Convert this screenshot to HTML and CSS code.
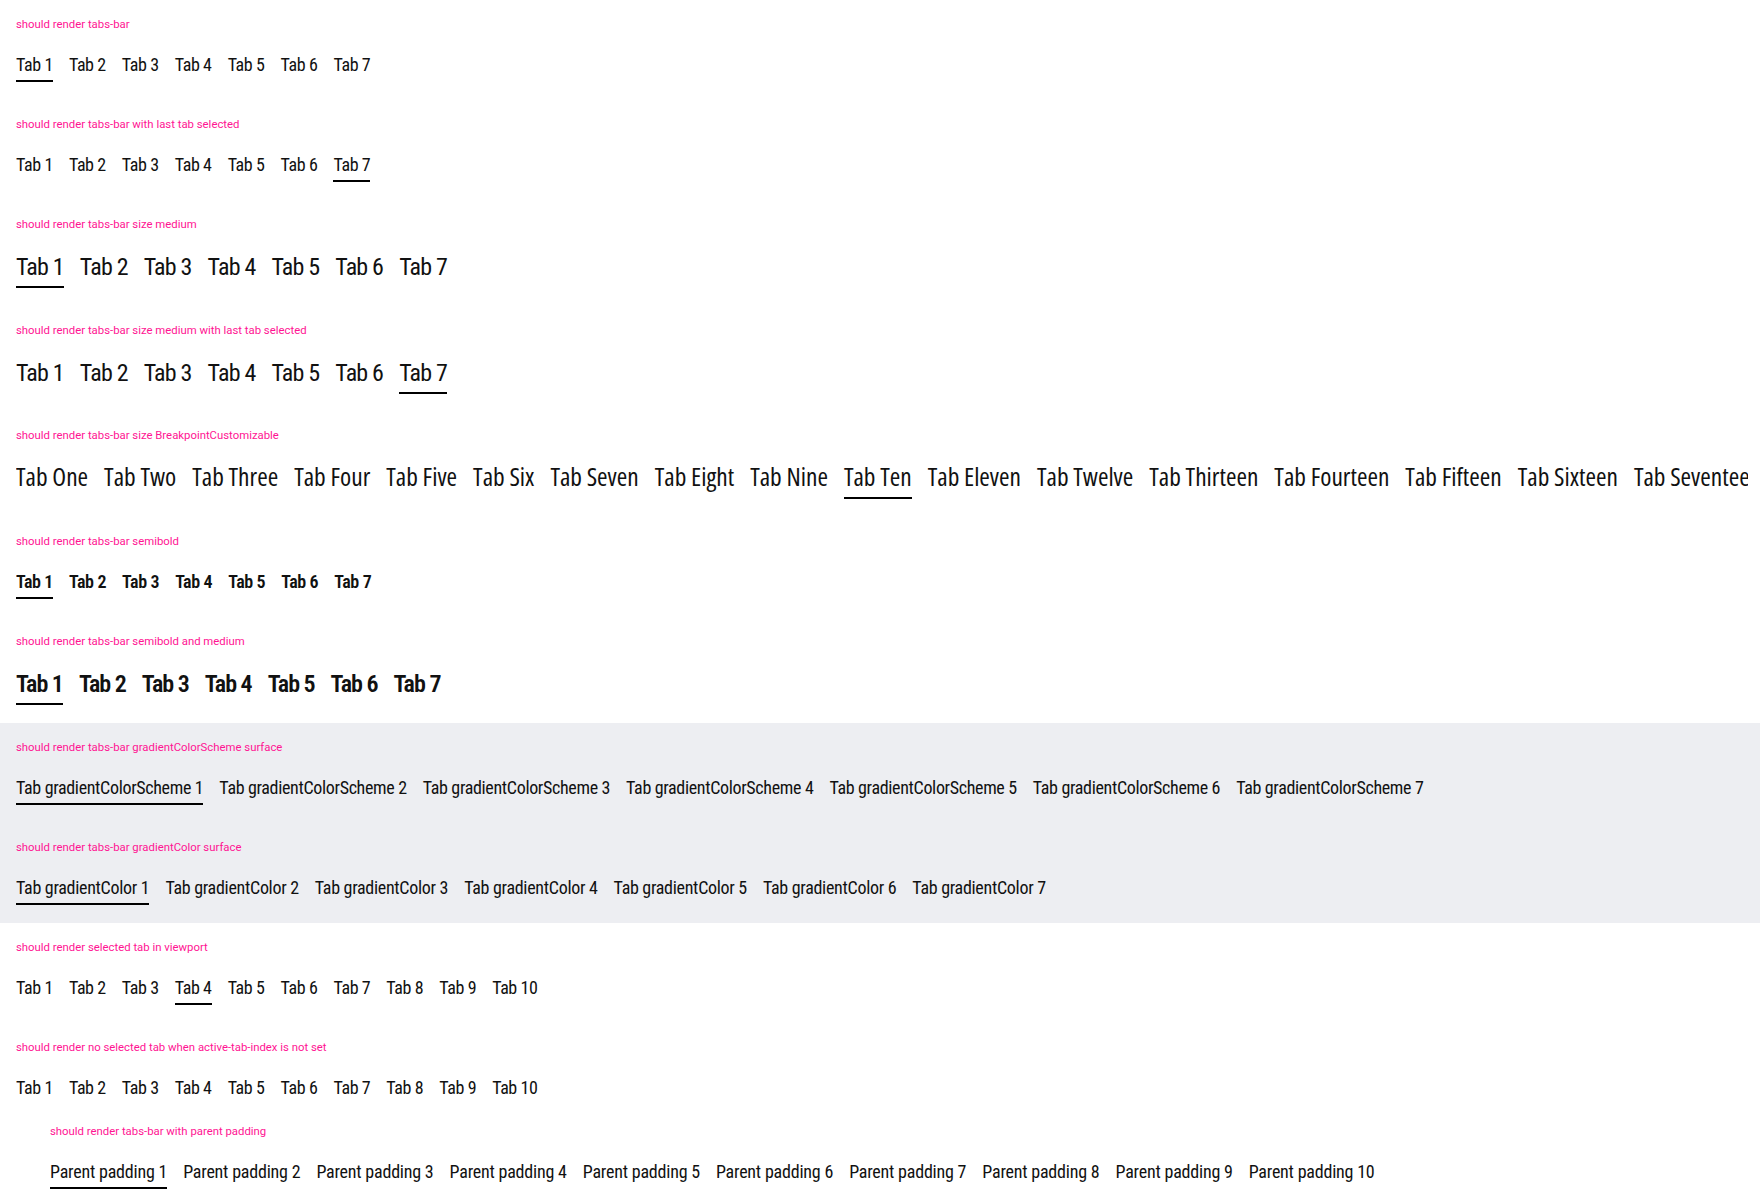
FILE: index.html
```html
<!DOCTYPE html>
<html lang="en">
<head>
<meta charset="utf-8">
<title>tabs-bar</title>
<link rel="stylesheet" href="styles.css">
</head>
<body>
<section class="section">
  <p class="label">should render tabs-bar</p>
  <div class="tabs tabs-small tabs-short">
    <span class="tab active">Tab 1</span><span class="tab">Tab 2</span><span class="tab">Tab 3</span><span class="tab">Tab 4</span><span class="tab">Tab 5</span><span class="tab">Tab 6</span><span class="tab">Tab 7</span>
  </div>
</section>
<section class="section">
  <p class="label">should render tabs-bar with last tab selected</p>
  <div class="tabs tabs-small tabs-short">
    <span class="tab">Tab 1</span><span class="tab">Tab 2</span><span class="tab">Tab 3</span><span class="tab">Tab 4</span><span class="tab">Tab 5</span><span class="tab">Tab 6</span><span class="tab active">Tab 7</span>
  </div>
</section>
<section class="section section-medium">
  <p class="label">should render tabs-bar size medium</p>
  <div class="tabs tabs-medium">
    <span class="tab active">Tab 1</span><span class="tab">Tab 2</span><span class="tab">Tab 3</span><span class="tab">Tab 4</span><span class="tab">Tab 5</span><span class="tab">Tab 6</span><span class="tab">Tab 7</span>
  </div>
</section>
<section class="section section-medium">
  <p class="label">should render tabs-bar size medium with last tab selected</p>
  <div class="tabs tabs-medium">
    <span class="tab">Tab 1</span><span class="tab">Tab 2</span><span class="tab">Tab 3</span><span class="tab">Tab 4</span><span class="tab">Tab 5</span><span class="tab">Tab 6</span><span class="tab active">Tab 7</span>
  </div>
</section>
<section class="section section-medium">
  <p class="label">should render tabs-bar size BreakpointCustomizable</p>
  <div class="tabs tabs-breakpoint">
    <span class="tab">Tab One</span><span class="tab">Tab Two</span><span class="tab">Tab Three</span><span class="tab">Tab Four</span><span class="tab">Tab Five</span><span class="tab">Tab Six</span><span class="tab">Tab Seven</span><span class="tab">Tab Eight</span><span class="tab">Tab Nine</span><span class="tab active">Tab Ten</span><span class="tab">Tab Eleven</span><span class="tab">Tab Twelve</span><span class="tab">Tab Thirteen</span><span class="tab">Tab Fourteen</span><span class="tab">Tab Fifteen</span><span class="tab">Tab Sixteen</span><span class="tab">Tab Seventeen</span>
  </div>
</section>
<section class="section">
  <p class="label">should render tabs-bar semibold</p>
  <div class="tabs tabs-small tabs-semibold">
    <span class="tab active">Tab 1</span><span class="tab">Tab 2</span><span class="tab">Tab 3</span><span class="tab">Tab 4</span><span class="tab">Tab 5</span><span class="tab">Tab 6</span><span class="tab">Tab 7</span>
  </div>
</section>
<section class="section section-medium">
  <p class="label">should render tabs-bar semibold and medium</p>
  <div class="tabs tabs-medium tabs-semibold">
    <span class="tab active">Tab 1</span><span class="tab">Tab 2</span><span class="tab">Tab 3</span><span class="tab">Tab 4</span><span class="tab">Tab 5</span><span class="tab">Tab 6</span><span class="tab">Tab 7</span>
  </div>
</section>
<section class="section section-surface">
  <p class="label">should render tabs-bar gradientColorScheme surface</p>
  <div class="tabs tabs-small">
    <span class="tab active">Tab gradientColorScheme 1</span><span class="tab">Tab gradientColorScheme 2</span><span class="tab">Tab gradientColorScheme 3</span><span class="tab">Tab gradientColorScheme 4</span><span class="tab">Tab gradientColorScheme 5</span><span class="tab">Tab gradientColorScheme 6</span><span class="tab">Tab gradientColorScheme 7</span>
  </div>
</section>
<section class="section section-surface">
  <p class="label">should render tabs-bar gradientColor surface</p>
  <div class="tabs tabs-small tabs-mid">
    <span class="tab active">Tab gradientColor 1</span><span class="tab">Tab gradientColor 2</span><span class="tab">Tab gradientColor 3</span><span class="tab">Tab gradientColor 4</span><span class="tab">Tab gradientColor 5</span><span class="tab">Tab gradientColor 6</span><span class="tab">Tab gradientColor 7</span>
  </div>
</section>
<section class="section">
  <p class="label">should render selected tab in viewport</p>
  <div class="tabs tabs-small tabs-short">
    <span class="tab">Tab 1</span><span class="tab">Tab 2</span><span class="tab">Tab 3</span><span class="tab active">Tab 4</span><span class="tab">Tab 5</span><span class="tab">Tab 6</span><span class="tab">Tab 7</span><span class="tab">Tab 8</span><span class="tab">Tab 9</span><span class="tab">Tab 10</span>
  </div>
</section>
<section class="section">
  <p class="label">should render no selected tab when active-tab-index is not set</p>
  <div class="tabs tabs-small tabs-short">
    <span class="tab">Tab 1</span><span class="tab">Tab 2</span><span class="tab">Tab 3</span><span class="tab">Tab 4</span><span class="tab">Tab 5</span><span class="tab">Tab 6</span><span class="tab">Tab 7</span><span class="tab">Tab 8</span><span class="tab">Tab 9</span><span class="tab">Tab 10</span>
  </div>
</section>
<section class="section section-parent">
  <p class="label">should render tabs-bar with parent padding</p>
  <div class="tabs tabs-small tabs-loose">
    <span class="tab active">Parent padding 1</span><span class="tab">Parent padding 2</span><span class="tab">Parent padding 3</span><span class="tab">Parent padding 4</span><span class="tab">Parent padding 5</span><span class="tab">Parent padding 6</span><span class="tab">Parent padding 7</span><span class="tab">Parent padding 8</span><span class="tab">Parent padding 9</span><span class="tab">Parent padding 10</span>
  </div>
</section>
</body>
</html>
```
FILE: styles.css
```css
html, body {
  margin: 0;
  padding: 0;
  background: #ffffff;
}

body {
  font-family: "Roboto", "Liberation Sans", sans-serif;
  color: #000000;
  overflow-x: hidden;
}

.section {
  padding: 16px 16px 18px;
}

.section-medium {
  padding-bottom: 17.7px;
}

.section-surface {
  background: #edeef2;
}

.section-parent {
  padding: 0 16px 0 50px;
}

.label {
  margin: 0;
  font-family: "Roboto", "Liberation Sans", sans-serif;
  font-size: 11.35px;
  line-height: 17px;
  color: #ff1493;
}

.tabs {
  display: flex;
  gap: 16px;
  overflow: hidden;
}

.tab {
  flex: none;
  white-space: nowrap;
  font-family: "Roboto", "Liberation Sans", sans-serif;
  font-stretch: condensed;
  color: #111111;
  border-bottom: 2px solid transparent;
}

.tab.active {
  border-bottom-color: #000000;
}

/* small */
.tabs-small {
  margin-top: 20px;
}

.tabs-small .tab {
  font-size: 18px;
  line-height: 24px;
  padding-bottom: 3px;
  letter-spacing: -0.34px;
}

.tabs-short .tab {
  letter-spacing: -0.4px;
}

.tabs-mid .tab {
  letter-spacing: -0.3px;
}

.tabs-loose .tab {
  letter-spacing: -0.21px;
}

/* medium */
.tabs-medium {
  margin-top: 18px;
}

.tabs-medium .tab {
  font-size: 24px;
  line-height: 32px;
  padding-bottom: 3px;
  letter-spacing: -0.8px;
}

/* breakpoint customizable (larger, more condensed) */
.tabs-breakpoint {
  margin-top: 15.6px;
  margin-right: -4px;
}

.tabs-breakpoint .tab {
  font-family: "Open Sans", "Roboto", sans-serif;
  font-stretch: 75%;
  font-size: 25.4px;
  line-height: 32px;
  padding-bottom: 5.4px;
}

/* semibold */
.tabs-semibold .tab {
  font-weight: 600;
}

.tabs-small.tabs-semibold .tab {
  letter-spacing: -0.38px;
}

.tabs-medium.tabs-semibold .tab {
  letter-spacing: -1px;
}
```
